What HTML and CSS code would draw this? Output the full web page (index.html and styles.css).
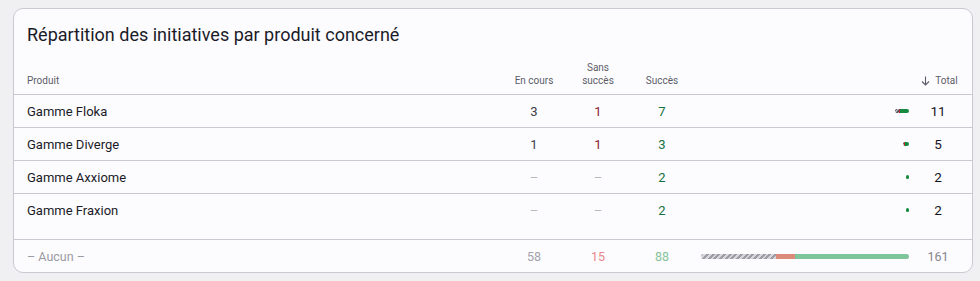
FILE: index.html
```html
<!DOCTYPE html>
<html lang="fr">
<head>
<meta charset="utf-8">
<title>Répartition des initiatives</title>
<link rel="stylesheet" href="styles.css">
</head>
<body>
<section class="card">
  <h2 class="title">Répartition des initiatives par produit concerné</h2>
  <div class="grid head">
    <div class="c-name">Produit</div>
    <div class="c-num">En cours</div>
    <div class="c-num">Sans<br>succès</div>
    <div class="c-num">Succès</div>
    <div class="c-bar"></div>
    <div class="c-total"><svg class="arrow" width="9" height="10" viewBox="0 0 9 10" aria-hidden="true"><path d="M4.5 0.5V9M1 5.5L4.5 9L8 5.5" fill="none" stroke="#5c5c68" stroke-width="1.1"/></svg>Total</div>
  </div>
  <div class="body">
    <div class="grid row">
      <div class="c-name">Gamme Floka</div>
      <div class="c-num prog">3</div>
      <div class="c-num fail">1</div>
      <div class="c-num ok">7</div>
      <div class="c-bar"><div class="bar"><span class="seg s-prog" style="width:3.9px"></span><span class="seg s-fail" style="width:1.3px"></span><span class="seg s-ok" style="width:9px"></span></div></div>
      <div class="c-total">11</div>
    </div>
    <div class="grid row">
      <div class="c-name">Gamme Diverge</div>
      <div class="c-num prog">1</div>
      <div class="c-num fail">1</div>
      <div class="c-num ok">3</div>
      <div class="c-bar"><div class="bar"><span class="seg s-prog" style="width:1.3px"></span><span class="seg s-fail" style="width:1.3px"></span><span class="seg s-ok" style="width:3.9px"></span></div></div>
      <div class="c-total">5</div>
    </div>
    <div class="grid row">
      <div class="c-name">Gamme Axxiome</div>
      <div class="c-num none">–</div>
      <div class="c-num none">–</div>
      <div class="c-num ok">2</div>
      <div class="c-bar"><div class="bar"><span class="seg s-ok" style="width:2.6px"></span></div></div>
      <div class="c-total">2</div>
    </div>
    <div class="grid row last">
      <div class="c-name">Gamme Fraxion</div>
      <div class="c-num none">–</div>
      <div class="c-num none">–</div>
      <div class="c-num ok">2</div>
      <div class="c-bar"><div class="bar"><span class="seg s-ok" style="width:2.6px"></span></div></div>
      <div class="c-total">2</div>
    </div>
  </div>
  <div class="grid foot">
    <div class="c-name">– Aucun –</div>
    <div class="c-num">58</div>
    <div class="c-num f-fail">15</div>
    <div class="c-num f-ok">88</div>
    <div class="c-bar"><div class="bar big"><span class="seg f-s-prog" style="width:75px"></span><span class="seg f-s-fail" style="width:19.4px"></span><span class="seg f-s-ok" style="width:113.6px"></span></div></div>
    <div class="c-total">161</div>
  </div>
</section>
</body>
</html>
```
FILE: styles.css
```css
html, body {
  margin: 0;
  background: #f0f0f3;
}
body {
  padding: 8px 7px 0 13px;
  font-family: Roboto, "Liberation Sans", Arial, sans-serif;
  color: #1b1b28;
}
.card {
  width: 960px;
  box-sizing: border-box;
  background: #fcfcfe;
  border: 1px solid #c9c9d1;
  border-radius: 10px;
  overflow: hidden;
}
.title {
  margin: 0;
  padding: 14px 13px 0;
  height: 24px;
  font-size: 18px;
  line-height: 24px;
  font-weight: 400;
  color: #1b1b28;
}
.grid {
  display: grid;
  grid-template-columns: 1fr 64px 64px 64px 224px 40px;
  padding: 0 14px 0 13px;
  align-items: center;
}
.head {
  align-items: end;
  padding-top: 14px;
  padding-bottom: 7px;
  font-size: 10px;
  line-height: 13px;
  color: #5c5c68;
  border-bottom: 1px solid #c9c9d1;
}
.c-num, .c-total {
  text-align: center;
}
.head .c-total {
  white-space: nowrap;
  margin-right: -3px;
  display: flex;
  justify-content: center;
  align-items: center;
}
.c-bar {
  padding: 0 9px 0 7px;
  display: flex;
  justify-content: flex-end;
}
.arrow {
  display: block;
  margin-right: 5px;
}
.body {
  padding-bottom: 13px;
  border-bottom: 1px solid #c9c9d1;
}
.row {
  height: 32px;
  font-size: 13px;
  border-bottom: 1px solid #c9c9d1;
}
.row.last {
  border-bottom: 0;
}
.row .c-total {
  font-size: 13.5px;
  color: #15151f;
}
.prog { color: #3e3e4a; }
.fail { color: #8a1d2c; }
.ok { color: #17703f; }
.none { color: #b8b8c0; }
.bar {
  display: flex;
  height: 4px;
  border-radius: 2px;
  overflow: hidden;
}
.bar.big {
  height: 5px;
  border-radius: 3px;
}
.seg {
  display: block;
  height: 100%;
}
.s-prog {
  background: repeating-linear-gradient(135deg, #55555f 0 1.5px, #b0b0b8 1.5px 3px);
}
.s-fail { background: #b3262d; }
.s-ok { background: #138a3e; }
.f-s-prog {
  background: repeating-linear-gradient(135deg, #9d9da6 0 2px, #d6d6dc 2px 4px);
}
.f-s-fail { background: #dc8b7a; }
.f-s-ok { background: #7fc59b; }
.foot {
  height: 32px;
  font-size: 12.5px;
  color: #9a9aa2;
}
.foot .c-num { color: #a2a2aa; }
.foot .f-fail { color: #e6878b; }
.foot .f-ok { color: #85c39b; }
.foot .c-total { color: #85858e; }
```
